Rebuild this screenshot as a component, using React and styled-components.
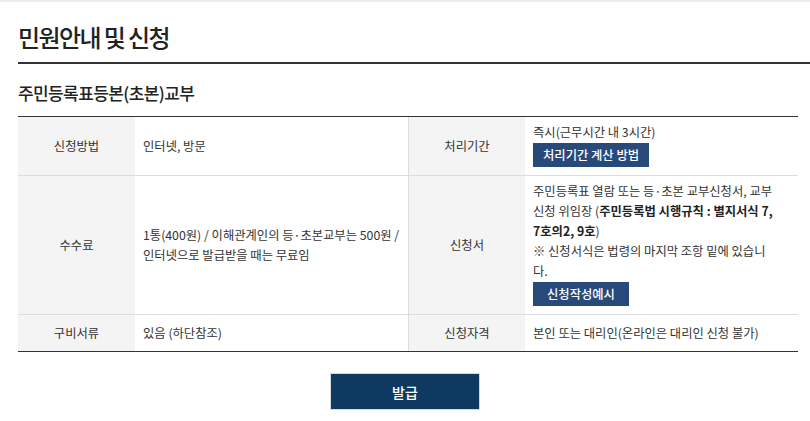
import React from "react";
import styled, { createGlobalStyle } from "styled-components";

const GlobalStyle = createGlobalStyle`
  html, body { margin: 0; padding: 0; background: #fff; }
  body {
    font-family: "Noto Sans CJK KR", "Noto Sans", sans-serif;
    color: #333;
  }
  * { box-sizing: border-box; }
`;

const Page = styled.div`
  width: 810px;
  border-top: 2px solid #ececec;
  padding-left: 18px;
`;

const Title = styled.h2`
  margin: 0;
  padding: 17px 0 7px;
  font-size: 24px;
  line-height: 36px;
  font-weight: 500;
  letter-spacing: -1.6px;
  color: #222;
  border-bottom: 2px solid #333;
`;

const SubTitle = styled.h3`
  margin: 17px 0 11px;
  font-size: 17px;
  line-height: 24px;
  font-weight: 500;
  letter-spacing: -0.6px;
  color: #222;
`;

const Table = styled.div`
  width: 780px;
  border-top: 1px solid #333;
  border-bottom: 1px solid #333;
`;

const Row = styled.div`
  display: grid;
  grid-template-columns: 117px 273px 117px 273px;
  min-height: ${(p) => p.$min || 0}px;
  & + & { border-top: 1px solid #ddd; }
`;

const Head = styled.div`
  display: flex;
  align-items: center;
  justify-content: center;
  background: #f4f4f4;
  font-size: 12.3px;
  line-height: 20px;
  color: #333;
  ${(p) => p.$divider && "border-left: 1px solid #ddd;"}
`;

const Cell = styled.div`
  display: flex;
  flex-direction: column;
  justify-content: ${(p) => (p.$top ? "flex-start" : "center")};
  align-items: flex-start;
  padding: ${(p) => (p.$top ? "5px 8px 8px" : "0 8px")};
  font-size: 12.3px;
  line-height: 20px;
  color: #333;
`;

const Text = styled.p`
  margin: 0;
`;

const Strong = styled.b`
  font-weight: 700;
  color: #222;
`;

const SmallButton = styled.button`
  margin-top: 1px;
  height: 24px;
  padding: 0 ${(p) => (p.$wide ? 14 : 10)}px;
  border: 0;
  background: #284a7b;
  color: #fff;
  font-family: inherit;
  font-size: 12.3px;
  font-weight: 500;
  line-height: 24px;
  cursor: pointer;
`;

const Footer = styled.div`
  display: flex;
  justify-content: center;
  padding: 21px 18px 0 0;
`;

const IssueButton = styled.button`
  width: 150px;
  height: 37px;
  border: 1px solid #d8d8d8;
  background: #0e3a62;
  color: #fff;
  font-family: inherit;
  font-size: 14px;
  font-weight: 500;
  cursor: pointer;
`;

export default function App() {
  return (
    <>
      <GlobalStyle />
      <Page>
        <Title>민원안내 및 신청</Title>
        <SubTitle>주민등록표등본(초본)교부</SubTitle>
        <Table>
          <Row>
            <Head>신청방법</Head>
            <Cell>인터넷, 방문</Cell>
            <Head $divider>처리기간</Head>
            <Cell $top>
              <Text>즉시(근무시간 내 3시간)</Text>
              <SmallButton>처리기간 계산 방법</SmallButton>
            </Cell>
          </Row>
          <Row>
            <Head>수수료</Head>
            <Cell>
              <Text>
                1통(400원) / 이해관계인의 등·초본교부는 500원 /<br />
                인터넷으로 발급받을 때는 무료임
              </Text>
            </Cell>
            <Head $divider>신청서</Head>
            <Cell $top>
              <Text>
                주민등록표 열람 또는 등·초본 교부신청서, 교부<br />
                신청 위임장 (<Strong>주민등록법 시행규칙 : 별지서식 7,<br />
                7호의2, 9호</Strong>)<br />
                ※ 신청서식은 법령의 마지막 조항 밑에 있습니<br />
                다.
              </Text>
              <SmallButton $wide>신청작성예시</SmallButton>
            </Cell>
          </Row>
          <Row $min={37}>
            <Head>구비서류</Head>
            <Cell>있음 (하단참조)</Cell>
            <Head $divider>신청자격</Head>
            <Cell>본인 또는 대리인(온라인은 대리인 신청 불가)</Cell>
          </Row>
        </Table>
        <Footer>
          <IssueButton>발급</IssueButton>
        </Footer>
      </Page>
    </>
  );
}
